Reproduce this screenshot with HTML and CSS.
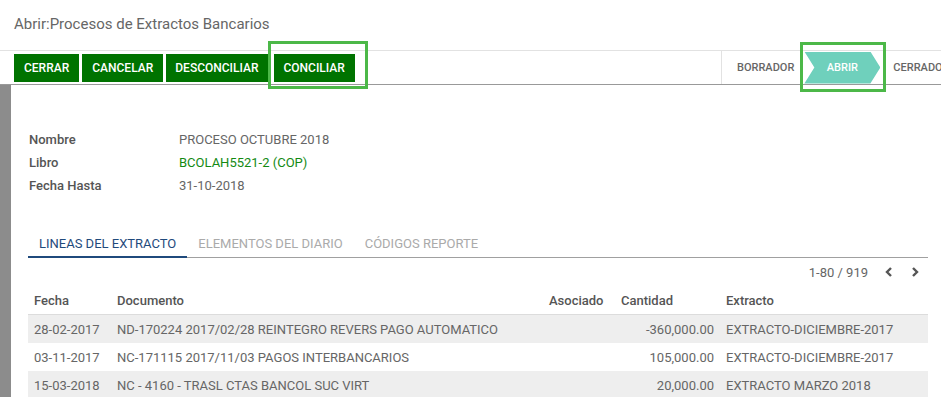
FILE: index.html
```html
<!DOCTYPE html>
<html lang="es">
<head>
  <meta charset="UTF-8" />
  <title>Abrir:Procesos de Extractos Bancarios</title>
  <link rel="stylesheet" href="styles.css">
</head>
<body>

<div class="title">Abrir:Procesos de Extractos Bancarios</div>

<div class="toolbar">
  <div class="buttons">
    <button class="btn">CERRAR</button>
    <button class="btn">CANCELAR</button>
    <button class="btn btn-narrow">DESCONCILIAR</button>
    <span class="marked marked-btn"><button class="btn">CONCILIAR</button></span>
  </div>
  <div class="statusbar">
    <span class="stage">BORRADOR</span>
    <span class="marked marked-stage"><span class="stage current">ABRIR</span></span>
    <span class="stage">CERRADO</span>
  </div>
</div>

<div class="main">
  <div class="side"></div>
  <div class="sheet">
    <table class="fields">
      <tr><td class="lbl">Nombre</td><td>PROCESO OCTUBRE 2018</td></tr>
      <tr><td class="lbl">Libro</td><td class="link">BCOLAH5521-2 (COP)</td></tr>
      <tr><td class="lbl">Fecha Hasta</td><td>31-10-2018</td></tr>
    </table>

    <div class="tabs">
      <span class="tab active">LINEAS DEL EXTRACTO</span>
      <span class="tab">ELEMENTOS DEL DIARIO</span>
      <span class="tab">CÓDIGOS REPORTE</span>
    </div>

    <div class="pager">
      <span>1-80 / 919</span>
      <svg width="10" height="12" viewBox="0 0 10 12"><polyline points="7,2 3,6 7,10" /></svg>
      <svg width="10" height="12" viewBox="0 0 10 12"><polyline points="3,2 7,6 3,10" /></svg>
    </div>

    <table class="lines">
      <thead>
        <tr>
          <th class="c-fecha">Fecha</th>
          <th class="c-doc">Documento</th>
          <th class="c-asoc">Asociado</th>
          <th class="c-cant">Cantidad</th>
          <th class="c-ext">Extracto</th>
        </tr>
      </thead>
      <tbody>
        <tr>
          <td>28-02-2017</td>
          <td>ND-170224 2017/02/28 REINTEGRO REVERS PAGO AUTOMATICO</td>
          <td></td>
          <td class="num">-360,000.00</td>
          <td>EXTRACTO-DICIEMBRE-2017</td>
        </tr>
        <tr>
          <td>03-11-2017</td>
          <td>NC-171115 2017/11/03 PAGOS INTERBANCARIOS</td>
          <td></td>
          <td class="num">105,000.00</td>
          <td>EXTRACTO-DICIEMBRE-2017</td>
        </tr>
        <tr>
          <td>15-03-2018</td>
          <td>NC - 4160 - TRASL CTAS BANCOL SUC VIRT</td>
          <td></td>
          <td class="num">20,000.00</td>
          <td>EXTRACTO MARZO 2018</td>
        </tr>
      </tbody>
    </table>
  </div>
</div>

</body>
</html>
```

FILE: styles.css
```css
body {
  margin: 0;
  font-family: Roboto, 'Liberation Sans', sans-serif;
  color: #555;
  background: #fff;
  overflow: hidden;
}
.title {
  height: 51px;
  box-sizing: border-box;
  padding: 15px 14px 0;
  font-size: 15px;
  color: #666;
  border-bottom: 1px solid #e2e2e2;
}
.toolbar {
  display: flex;
  justify-content: space-between;
  height: 33px;
  border-bottom: 1px solid #999;
}
.buttons {
  display: flex;
  align-items: flex-start;
  gap: 3px;
  padding: 3px 0 0 14px;
}
.btn {
  height: 28px;
  padding: 0 10px;
  border: none;
  background: #007300;
  color: #fff;
  font-family: inherit;
  font-size: 12px;
  font-weight: 500;
}
.btn-narrow {
  padding: 0 9px;
}
.marked {
  position: relative;
  display: inline-block;
}
.marked-btn {
  margin-left: 3px;
}
/* green annotation boxes */
.marked::after {
  content: '';
  position: absolute;
  border: 3px solid #4cb848;
  pointer-events: none;
}
.marked-btn::after {
  top: -13px;
  bottom: -7px;
  left: -6px;
  right: -13px;
}
.marked-stage::after {
  top: -10px;
  bottom: -8px;
  left: -4px;
  right: -6px;
}
.statusbar {
  display: flex;
  align-items: center;
  flex-shrink: 0;
  box-sizing: border-box;
  width: 220px;
  border-left: 1px solid #e2e2e2;
  padding-left: 15px;
  white-space: nowrap;
}
.stage {
  font-size: 11px;
  font-weight: 500;
  color: #666;
}
.marked-stage {
  margin: 0 13px 0 10px;
}
.stage.current {
  display: flex;
  align-items: center;
  justify-content: center;
  width: 76px;
  height: 32px;
  background: #6fd0bc;
  color: #fff;
  clip-path: polygon(0 0, 66px 0, 100% 50%, 66px 100%, 0 100%, 10px 50%);
}
.main {
  display: flex;
}
.side {
  width: 11px;
  height: 320px;
  background: #8c8c8c;
}
.sheet {
  flex: 1;
  padding: 0 13px 0 17px;
  font-size: 13px;
}
.fields {
  border-collapse: collapse;
  margin: 43px 0 0 1px;
}
.fields td {
  height: 23px;
  padding: 0;
  color: #666;
}
.fields .lbl {
  width: 150px;
  font-weight: 500;
  color: #555;
}
.fields .link {
  color: #138a13;
}
.tabs {
  display: flex;
  margin-top: 35px;
  border-bottom: 1px solid #a0a0a0;
}
.tab {
  padding: 4px 11px 5px;
  color: #aaa;
}
.tab.active {
  color: #1f4a7c;
  border-bottom: 2px solid #1f4a7c;
  margin-bottom: -1px;
}
.pager {
  display: flex;
  justify-content: flex-end;
  align-items: center;
  gap: 16px;
  height: 28px;
  padding-right: 8px;
  color: #666;
}
.pager svg polyline {
  fill: none;
  stroke: #555;
  stroke-width: 2.4;
}
.lines {
  width: 100%;
  border-collapse: collapse;
  color: #666;
}
.lines th {
  height: 28px;
  padding: 0 6px;
  text-align: left;
  font-weight: 500;
  color: #555;
  border-bottom: 1px solid #dcdcdc;
}
.lines td {
  height: 28px;
  padding: 0 6px;
  white-space: nowrap;
}
.lines tbody tr:nth-child(odd) {
  background: #eeeeee;
}
.c-fecha { width: 71px; }
.c-doc { width: 420px; }
.c-asoc { width: 60px; }
.c-cant { width: 93px; }
.lines .num {
  text-align: right;
}
```
